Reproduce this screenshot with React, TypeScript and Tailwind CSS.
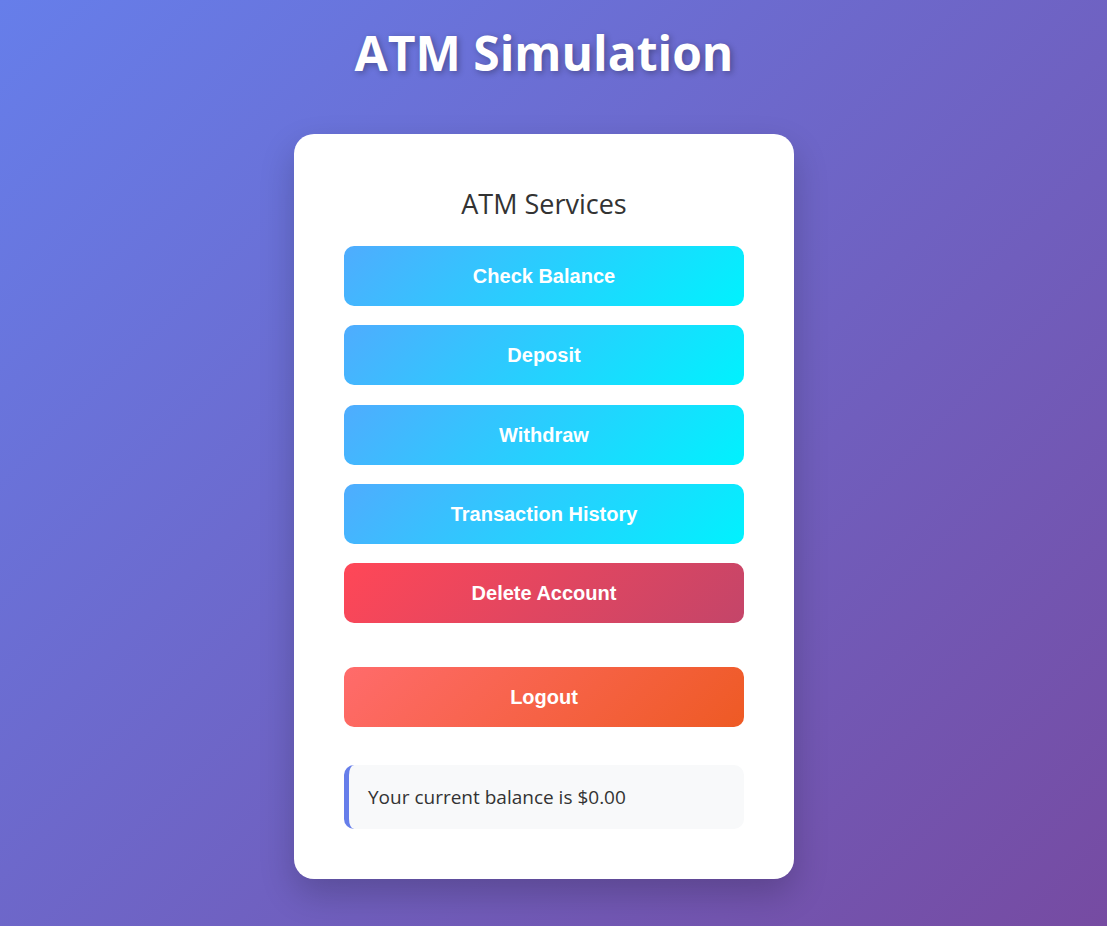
import React from 'react';

const services = ['Check Balance', 'Deposit', 'Withdraw', 'Transaction History'];

const App: React.FC = () => {
  return (
    <div className="min-h-[926px] w-full pr-[19px] bg-[linear-gradient(135deg,#667eea_0%,#764ba2_100%)] font-['Open_Sans','Noto_Sans',sans-serif] flex flex-col items-center">
      <h1 className="mt-[22px] h-[62px] leading-[62px] text-[48px] font-bold text-white [text-shadow:2px_2px_6px_rgba(0,0,0,0.3)]">
        ATM Simulation
      </h1>

      <div className="mt-[50px] w-[500px] bg-white rounded-[20px] shadow-[0_15px_35px_rgba(0,0,0,0.2)] px-[50px] pt-[50px] pb-[50px]">
        <h2 className="h-[40px] leading-[40px] text-center text-[27px] font-medium text-[#333]">ATM Services</h2>

        <div className="mt-[22px] flex flex-col gap-[19.3px]">
          {services.map((s) => (
            <button
              key={s}
              className="h-[60px] w-full rounded-[10px] bg-[linear-gradient(135deg,#4facfe_0%,#00f2fe_100%)] text-white text-[20px] font-bold font-['Liberation_Sans',Arial,sans-serif]"
            >
              {s}
            </button>
          ))}
          <button className="h-[60px] w-full rounded-[10px] bg-[linear-gradient(135deg,#ff4757_0%,#c44569_100%)] text-white text-[20px] font-bold font-['Liberation_Sans',Arial,sans-serif]">
            Delete Account
          </button>
        </div>

        <button className="mt-[44px] h-[60px] w-full rounded-[10px] bg-[linear-gradient(135deg,#ff6b6b_0%,#ee5a24_100%)] text-white text-[20px] font-bold font-['Liberation_Sans',Arial,sans-serif]">
          Logout
        </button>

        <div className="mt-[38px] h-[64px] rounded-[10px] bg-[#f8f9fa] border-l-[5px] border-[#667eea] pl-[19px] flex items-center text-[19px] font-medium text-[#333]">
          Your current balance is $0.00
        </div>
      </div>
    </div>
  );
};

export default App;
